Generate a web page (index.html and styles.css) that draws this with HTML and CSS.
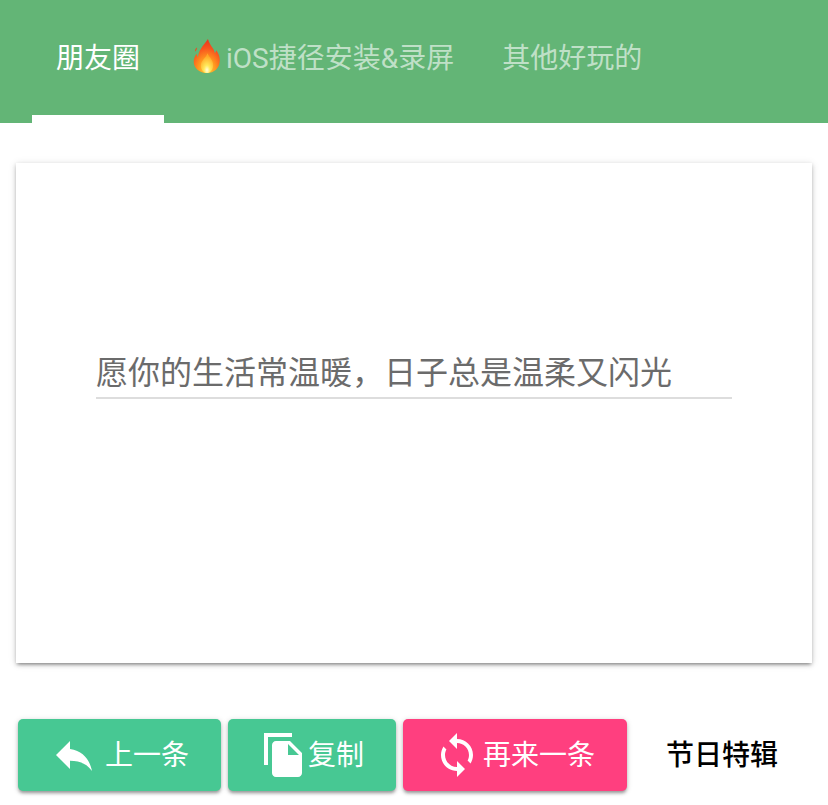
FILE: index.html
```html
<!DOCTYPE html>
<html lang="zh-CN">

<head>
    <meta charset="UTF-8">
    <title>朋友圈</title>
    <link rel="stylesheet" href="styles.css">
</head>

<body>
    <header class="topbar">
        <nav class="tabs">
            <a class="tab active">朋友圈</a>
            <a class="tab">
                <svg class="flame" viewBox="0 0 38 40" aria-hidden="true">
                    <defs>
                        <radialGradient id="flame-fill" cx="50%" cy="90%" r="90%">
                            <stop offset="0" stop-color="#ffd23c"/>
                            <stop offset=".35" stop-color="#ff9a1f"/>
                            <stop offset=".7" stop-color="#f8541e"/>
                            <stop offset="1" stop-color="#e8351c"/>
                        </radialGradient>
                        <radialGradient id="flame-core" cx="50%" cy="85%" r="70%">
                            <stop offset="0" stop-color="#fffde0"/>
                            <stop offset=".35" stop-color="#ffe95a"/>
                            <stop offset="1" stop-color="#ffa726"/>
                        </radialGradient>
                    </defs>
                    <path fill="url(#flame-fill)" d="M20 1c1 4 3 6.500 5 9.500 1.200 1.800 2 3.500 2.300 5.500.8-.8 1.300-1.800 1.500-3 2.500 3.500 3.700 7 3.700 10.500C32.500 32 26.500 37 19 37S5 32 5 25c0-3.500 1.200-6 3-8.500.2 1.500.7 2.700 1.500 3.500C10 13 15 8 20 1z"/>
                    <path fill="#ef4a20" d="M8.500 10c.2 1.500-1 3-2.200 4.500-.2-1.800.6-3.500 2.200-4.500z"/>
                    <path fill="url(#flame-core)" d="M19.500 16c1 3.500 6 6.500 6 12.500 0 5-3 8.500-6.500 8.500s-6.500-3.500-6.500-8c0-5.500 5.500-8 7-13z"/>
                </svg>iOS捷径安装&amp;录屏
            </a>
            <a class="tab">其他好玩的</a>
        </nav>
    </header>

    <main class="card">
        <div class="field">愿你的生活常温暖，日子总是温柔又闪光</div>
    </main>

    <section class="actions">
        <button class="btn green">
            <svg class="icon" viewBox="0 0 24 24"><path d="M10 9V5l-7 7 7 7v-4.100c5 0 8.500 1.600 11 5.100-1-5-4-10-11-11z"/></svg>
            <span class="label label-gap">上一条</span>
        </button>
        <button class="btn green">
            <svg class="icon" viewBox="0 0 24 24"><path d="M16 1H2v16h2V3h12V1zm-1 4l6 6v10c0 1.100-.9 2-2 2H7.990C6.890 23 6 22.100 6 21l.01-14c0-1.100.89-2 1.990-2h7zm-1 7h5.500L14 6.500V12z"/></svg>
            <span class="label">复制</span>
        </button>
        <button class="btn pink">
            <svg class="icon sync" viewBox="0 0 24 24"><path d="M12 4V1L8 5l4 4V6c3.310 0 6 2.690 6 6 0 1.010-.25 1.970-.7 2.800l1.460 1.460C19.540 15.030 20 13.570 20 12c0-4.420-3.580-8-8-8zm0 14c-3.310 0-6-2.690-6-6 0-1.010.25-1.970.7-2.800L5.240 7.740C4.460 8.970 4 10.430 4 12c0 4.420 3.580 8 8 8v3l4-4-4-4v3z"/></svg>
            <span class="label">再来一条</span>
        </button>
        <button class="btn flat"><span class="label">节日特辑</span></button>
    </section>
</body>

</html>
```

FILE: styles.css
```css
body {
    margin: 0;
    background-color: white;
    font-family: Roboto, "Noto Sans CJK SC", sans-serif;
}

.topbar {
    height: 123px;
    background-color: #63b576;
}

.tabs {
    display: flex;
    height: 100%;
    padding-left: 32px;
}

.tab {
    display: flex;
    align-items: center;
    box-sizing: border-box;
    height: 100%;
    padding: 0 24px 12px;
    font-size: 28px;
    color: rgba(255, 255, 255, .6);
    white-space: nowrap;
}

.tab.active {
    color: white;
    border-bottom: 8px solid white;
    padding-bottom: 4px;
}

.flame {
    width: 36px;
    height: 38px;
    margin: 3px 1px 0;
}

.card {
    display: flex;
    flex-direction: column;
    justify-content: center;
    box-sizing: border-box;
    height: 500px;
    margin: 40px 16px 56px;
    padding: 0 80px 76px;
    background-color: white;
    box-shadow: 0 3px 3px -2px rgba(0, 0, 0, .3), 0 2px 4px 0 rgba(0, 0, 0, .2), 0 1px 8px 0 rgba(0, 0, 0, .12);
}

.field {
    padding-bottom: 2px;
    font-size: 32px;
    line-height: 44px;
    color: #6b6b6b;
    border-bottom: 2px solid #ddd;
}

.actions {
    display: flex;
    gap: 7px;
    padding: 0 0 14px 18px;
}

.btn {
    display: flex;
    align-items: center;
    height: 72px;
    padding: 0 32px;
    border: 0;
    border-radius: 5px;
    font-family: inherit;
    font-size: 28px;
    color: white;
    box-shadow: 0 3px 3px -1px rgba(0, 0, 0, .25), 0 2px 4px 0 rgba(0, 0, 0, .14), 0 1px 6px 0 rgba(0, 0, 0, .12);
}

.green {
    background-color: #47c893;
}

.pink {
    background-color: #ff3f7f;
}

.flat {
    background: none;
    color: black;
    font-weight: 500;
    box-shadow: none;
}

.icon {
    width: 48px;
    height: 48px;
    fill: white;
}

.sync {
    margin: 0 2px 0 -2px;
}

.label {
    margin-bottom: 4px;
}

.label-gap {
    margin-left: 7px;
}
```
